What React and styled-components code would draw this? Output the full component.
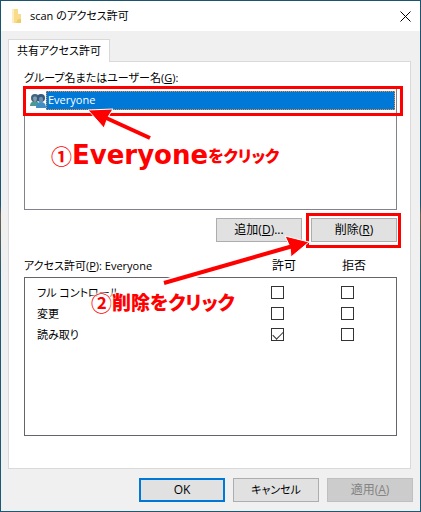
import React, { useState } from "react";
import styled, { createGlobalStyle, css } from "styled-components";

const permissionRows = [
  { id: "full", name: "フル コントロール" },
  { id: "change", name: "変更" },
  { id: "read", name: "読み取り" },
];

export default function App() {
  const [checked, setChecked] = useState({ "read-allow": true });

  const toggle = (key) => {
    setChecked({ ...checked, [key]: !checked[key] });
  };

  return (
    <>
      <GlobalStyle />
      <Desktop>
        <Dialog role="dialog" aria-labelledby="dialog-title">
          <TitleBar>
            <FolderIcon />
            <Title id="dialog-title">scan のアクセス許可</Title>
            <CloseButton aria-label="閉じる">
              <svg width="11" height="11" viewBox="0 0 11 11">
                <path d="M0.5 0.5L10.5 10.5M10.5 0.5L0.5 10.5" stroke="#000" />
              </svg>
            </CloseButton>
          </TitleBar>
          <Body>
            <Tabs role="tablist">
              <Tab role="tab" aria-selected="true">
                共有アクセス許可
              </Tab>
            </Tabs>
            <Panel role="tabpanel">
              <Label id="group-label">
                グループ名またはユーザー名(<u>G</u>):
              </Label>
              <UserList role="listbox" aria-labelledby="group-label">
                <UserItem role="option" aria-selected="true">
                  <UsersIcon />
                  <UserName>Everyone</UserName>
                </UserItem>
                <Highlight $y={-2} $left={-2} $right={-7} $height={30} />
              </UserList>
              <ListButtons>
                <Button>
                  追加(<u>D</u>)...
                </Button>
                <Marked>
                  <Button>
                    削除(<u>R</u>)
                  </Button>
                  <Highlight $y={-5} $left={-5} $right={-4} $height={35} />
                </Marked>
              </ListButtons>
              <PermissionTable>
                <thead>
                  <HeadRow>
                    <th scope="col">
                      アクセス許可(<u>P</u>): Everyone
                    </th>
                    <th scope="col">許可</th>
                    <th scope="col">拒否</th>
                  </HeadRow>
                </thead>
                <PermissionBody>
                  {permissionRows.map((row) => (
                    <PermissionRow key={row.id}>
                      <th scope="row">{row.name}</th>
                      <td>
                        <CheckBox
                          type="checkbox"
                          aria-label={`${row.name} 許可`}
                          checked={!!checked[`${row.id}-allow`]}
                          onChange={() => toggle(`${row.id}-allow`)}
                        />
                      </td>
                      <td>
                        <CheckBox
                          type="checkbox"
                          aria-label={`${row.name} 拒否`}
                          checked={!!checked[`${row.id}-deny`]}
                          onChange={() => toggle(`${row.id}-deny`)}
                        />
                      </td>
                    </PermissionRow>
                  ))}
                </PermissionBody>
              </PermissionTable>
            </Panel>
            <Footer>
              <Button $primary>OK</Button>
              <Button $compact>キャンセル</Button>
              <Button disabled>
                適用(<u>A</u>)
              </Button>
            </Footer>
          </Body>
        </Dialog>
        <Arrows />
        <Note $x={51} $y={141}>
          <NoteNumber>①</NoteNumber>
          <NoteLatin>Everyone</NoteLatin>
          <NoteText $size={16}>をクリック</NoteText>
        </Note>
        <Note $x={91} $y={288}>
          <NoteNumber>②</NoteNumber>
          <NoteText $size={19}>削除をクリック</NoteText>
        </Note>
      </Desktop>
    </>
  );
}

function FolderIcon() {
  return (
    <svg width="16" height="16" viewBox="0 0 16 16" aria-hidden="true">
      <path d="M2 1h6v5h3v9H2z" fill="#f8dc8b" />
      <path d="M2 1h2v14H2z" fill="#fdeebb" />
      <path d="M8 11h3v4H6z" fill="#efcb6c" />
    </svg>
  );
}

function UsersIcon() {
  return (
    <svg width="16" height="16" viewBox="0 0 16 16" aria-hidden="true">
      <path d="M0 13c0-3 2-5 5-5s4 2 4 5z" fill="#4d9a94" />
      <circle cx="5" cy="5" r="4" fill="#41647f" />
      <path d="M3 5c0-2 4-2 4 0s-1 4-2 4-2-2-2-4z" fill="#7e9cab" />
      <path d="M6 15c0-4 2-6 5-6s5 2 5 6z" fill="#3f8fc4" />
      <circle cx="11" cy="5" r="4" fill="#36597c" />
      <path d="M9 6c0-3 4-3 4 0s-1 4-2 4-2-2-2-4z" fill="#6b8fae" />
    </svg>
  );
}

function Arrows() {
  return (
    <ArrowLayer width="421" height="512" viewBox="0 0 421 512" aria-hidden="true">
      <g stroke="#fff" strokeWidth="8">
        <path d="M150 137L105 118" />
        <path d="M164 283L292 247" />
      </g>
      <g fill="#f00" stroke="#fff" strokeWidth="1">
        <path d="M88 110L113 109L108 117L104 128z" />
        <path d="M309 242L285 236L290 247L291 257z" />
      </g>
      <g stroke="#f00" strokeWidth="4">
        <path d="M150 138L104 117" />
        <path d="M164 283L293 246" />
      </g>
    </ArrowLayer>
  );
}

const GlobalStyle = createGlobalStyle`
  * {
    box-sizing: border-box;
  }
  body {
    margin: 0;
    color: #000;
    font-family: "Open Sans", "Noto Sans CJK JP", sans-serif;
    font-size: 11px;
    line-height: 16px;
    font-feature-settings: "palt";
  }
`;

const Desktop = styled.div`
  position: relative;
  display: flex;
  min-height: 100vh;
  padding: 1px;
  background: linear-gradient(#1a5470 40%, #6b6250 42%, #1a5a74 55%);
`;

const Dialog = styled.div`
  flex: 1;
  display: flex;
  flex-direction: column;
  background: #f0f0f0;
`;

const TitleBar = styled.header`
  display: flex;
  align-items: center;
  height: 30px;
  padding: 0 9px;
  background: #fff;
`;

const Title = styled.h1`
  flex: 1;
  margin: 0 0 0 4px;
  font-size: 11px;
  font-weight: 400;
`;

const CloseButton = styled.button`
  display: flex;
  padding: 0;
  border: none;
  background: none;
`;

const Body = styled.div`
  flex: 1;
  display: flex;
  flex-direction: column;
  padding: 8px 7px 9px;
`;

const Tabs = styled.div`
  display: flex;
`;

const Tab = styled.button`
  z-index: 1;
  height: 23px;
  margin-bottom: -1px;
  padding: 0 8px;
  border: 1px solid #d9d9d9;
  border-bottom: none;
  background: #fff;
  color: inherit;
  font: inherit;
  font-feature-settings: inherit;
`;

const Panel = styled.section`
  flex: 1;
  display: flex;
  flex-direction: column;
  margin-right: 2px;
  padding: 8px 13px 32px 15px;
  border: 1px solid #d9d9d9;
  background: #fff;
`;

const Label = styled.div`
  height: 17px;
`;

const UserList = styled.ul`
  position: relative;
  height: 123px;
  margin: 0;
  padding: 3px 1px;
  border: 1px solid #82828c;
  list-style: none;
`;

const UserItem = styled.li`
  display: flex;
  align-items: center;
  padding-left: 4px;
`;

const UserName = styled.span`
  flex: 1;
  height: 19px;
  padding-left: 1px;
  border: 1px dotted #ff8728;
  background: #0078d7;
  color: #fff;
`;

const Highlight = styled.div`
  position: absolute;
  top: ${(props) => props.$y}px;
  left: ${(props) => props.$left}px;
  right: ${(props) => props.$right}px;
  height: ${(props) => props.$height}px;
  border: 3px solid #f00;
  pointer-events: none;
`;

const ListButtons = styled.div`
  display: flex;
  justify-content: flex-end;
  gap: 9px;
  margin-top: 8px;
`;

const Marked = styled.div`
  position: relative;
`;

const Button = styled.button`
  display: block;
  width: 86px;
  height: 24px;
  padding: 0;
  border: 1px solid #adadad;
  background: #e1e1e1;
  color: #000;
  font: inherit;
  font-size: ${(props) => (props.$compact ? 11 : 12)}px;
  font-feature-settings: inherit;
  ${(props) =>
    props.$primary &&
    css`
      border: 2px solid #0078d7;
    `}
  &:disabled {
    border-color: #bfbfbf;
    background: #ccc;
    color: #838383;
  }
`;

const PermissionTable = styled.table`
  flex: 1;
  display: flex;
  flex-direction: column;
  margin-top: 16px;
`;

const columns = css`
  display: grid;
  grid-template-columns: 1fr 70px 55px;
  > th,
  > td {
    padding: 0;
    font-weight: 400;
    text-align: left;
  }
`;

const HeadRow = styled.tr`
  ${columns}
  height: 19px;
  > th + th {
    font-size: 12px;
  }
`;

const PermissionBody = styled.tbody`
  flex: 1;
  display: block;
  min-height: 72px;
  padding: 4px 0 4px 12px;
  border: 1px solid #64646a;
`;

const PermissionRow = styled.tr`
  ${columns}
  align-items: center;
  height: 21px;
`;

const CheckBox = styled.input`
  appearance: none;
  display: block;
  width: 13px;
  height: 13px;
  margin: 0;
  border: 1px solid #333;
  background: #fff;
  &:checked::before {
    content: "";
    display: block;
    width: 9px;
    height: 5px;
    margin: 2px 1px;
    border: solid #333;
    border-width: 0 0 1px 1px;
    transform: rotate(-45deg);
  }
`;

const Footer = styled.footer`
  display: flex;
  justify-content: flex-end;
  gap: 8px;
  margin-top: 9px;
`;

const ArrowLayer = styled.svg`
  position: absolute;
  top: 0;
  left: 0;
  pointer-events: none;
`;

const Note = styled.p`
  position: absolute;
  top: ${(props) => props.$y}px;
  left: ${(props) => props.$x}px;
  display: flex;
  align-items: center;
  margin: 0;
  color: #f00;
  font-family: "Noto Sans CJK JP", sans-serif;
  font-weight: 900;
  line-height: 28px;
  white-space: nowrap;
  text-shadow: 0 0 2px #fff, 0 0 2px #fff, 0 0 3px #fff, 0 0 3px #fff,
    0 0 4px #fff, 0 0 4px #fff;
  pointer-events: none;
`;

const NoteNumber = styled.span`
  font-size: 21px;
  font-weight: 700;
  font-feature-settings: normal;
`;

const NoteLatin = styled.span`
  font-family: "DejaVu Sans", sans-serif;
  font-size: 26px;
`;

const NoteText = styled.span`
  font-size: ${(props) => props.$size}px;
`;
